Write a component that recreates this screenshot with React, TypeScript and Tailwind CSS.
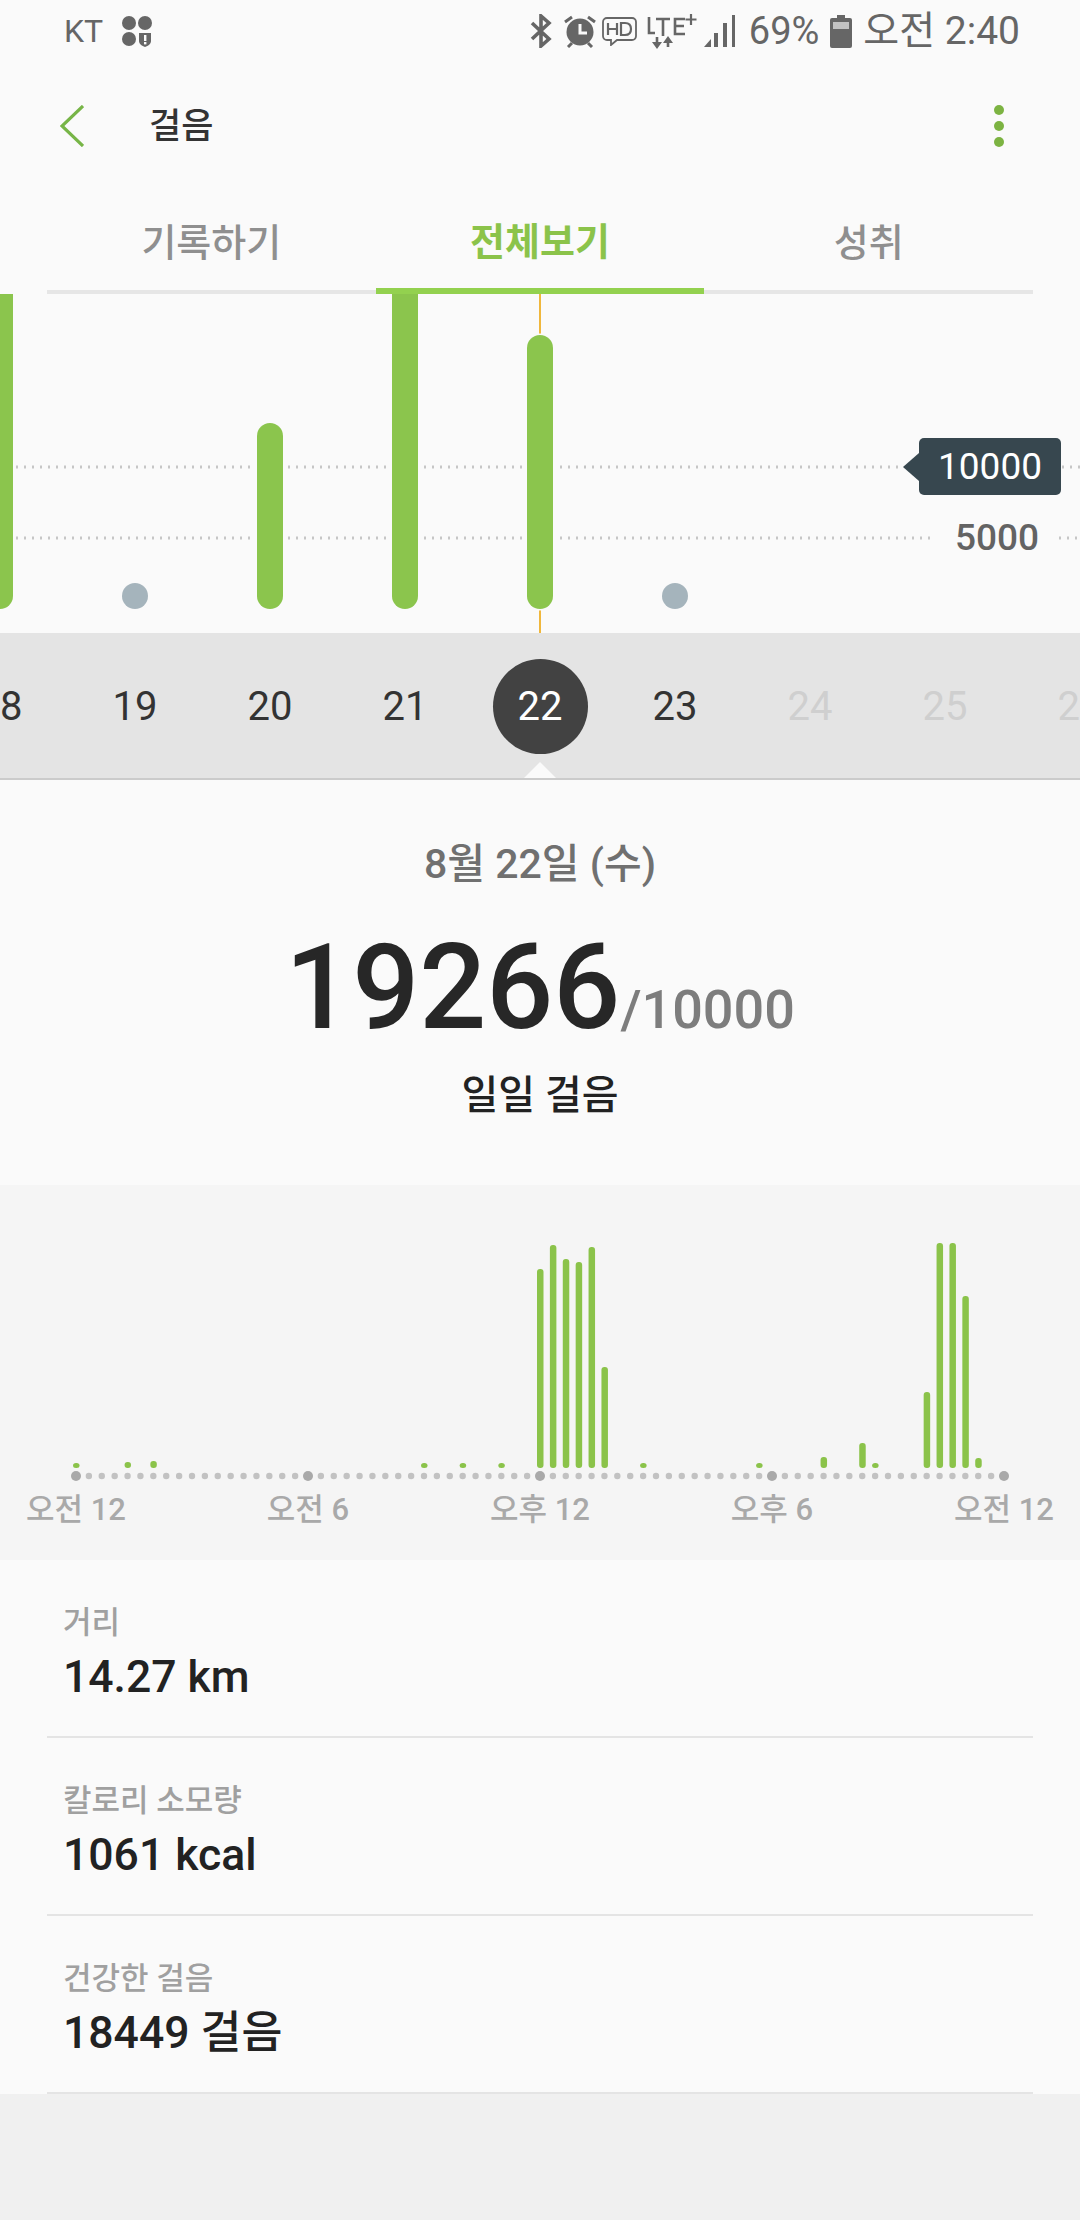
const FONT = "font-['Roboto','Noto_Sans_CJK_KR',sans-serif]";

const hourBars: { idx: number; top: number }[] = [
  { idx: 0, top: 1463 },
  { idx: 4, top: 1462 },
  { idx: 6, top: 1461 },
  { idx: 27, top: 1463 },
  { idx: 30, top: 1463 },
  { idx: 33, top: 1463 },
  { idx: 36, top: 1269 },
  { idx: 37, top: 1245 },
  { idx: 38, top: 1259 },
  { idx: 39, top: 1262 },
  { idx: 40, top: 1247 },
  { idx: 41, top: 1367 },
  { idx: 44, top: 1463 },
  { idx: 53, top: 1463 },
  { idx: 58, top: 1457 },
  { idx: 61, top: 1443 },
  { idx: 62, top: 1463 },
  { idx: 66, top: 1392 },
  { idx: 67, top: 1243 },
  { idx: 68, top: 1243 },
  { idx: 69, top: 1296 },
  { idx: 70, top: 1458 },
];

const days = [
  { n: '18', tone: 'dark' },
  { n: '19', tone: 'dark' },
  { n: '20', tone: 'dark' },
  { n: '21', tone: 'dark' },
  { n: '22', tone: 'active' },
  { n: '23', tone: 'dark' },
  { n: '24', tone: 'off' },
  { n: '25', tone: 'off' },
  { n: '26', tone: 'off' },
];

const stats = [
  { label: '거리', value: '14.27 km' },
  { label: '칼로리 소모량', value: '1061 kcal' },
  { label: '건강한 걸음', value: '18449 걸음' },
];

const axisLabels = ['오전 12', '오전 6', '오후 12', '오후 6', '오전 12'];

function StatusLeft() {
  return (
    <div className="flex items-center gap-[18px]">
      <span className="text-[32px] leading-none text-[#666]">KT</span>
      <svg width="32" height="32" viewBox="0 0 32 32" fill="#666">
        <circle cx="8" cy="8" r="7" />
        <circle cx="24" cy="8" r="7" />
        <circle cx="8" cy="24" r="7" />
        <path d="M18 18h12v8c0 3-3 5-6 6-3-1-6-3-6-6z" />
        <rect x="23" y="20" width="2.4" height="6" fill="#fafafa" />
        <rect x="23" y="27" width="2.4" height="2.4" fill="#fafafa" />
      </svg>
    </div>
  );
}

function StatusRight() {
  return (
    <div className="flex items-center">
      <svg width="22" height="34" viewBox="0 0 22 34" fill="none" stroke="#666" strokeWidth="3.6" className="mr-[12px]">
        <path d="M2 9l17 16-8 7V2l8 7L2 25" />
      </svg>
      <svg width="32" height="33" viewBox="0 0 32 33" className="mr-[6px]">
        <circle cx="16" cy="17" r="13.500" fill="#666" />
        <path d="M16 9v9h7" fill="none" stroke="#fafafa" strokeWidth="3" />
        <path d="M1 7l7-5M31 7l-7-5M4 32l4-4M28 32l-4-4" stroke="#666" strokeWidth="3" />
      </svg>
      <svg width="35" height="29" viewBox="0 0 35 29" fill="none" stroke="#666" strokeWidth="1.800" className="mr-[10px]">
        <path d="M5 1h25a4 4 0 0 1 4 4v14a4 4 0 0 1-4 4H15l-6 5v-5H5a4 4 0 0 1-4-4V5a4 4 0 0 1 4-4z" />
        <path d="M6 6v12M15 6v12M6 12h9M19 6v12h4c5 0 6-2.500 6-6s-1-6-6-6z" strokeWidth="2.200" />
      </svg>
      <svg width="51" height="35" viewBox="0 0 51 35" fill="none" stroke="#666" strokeWidth="2.600" className="mr-[6px]">
        <path d="M2 3v16h6M9 5h14M16 5v17M38 5H28v15h10M28 12h9" />
        <path d="M44 0v11M38.500 5.500h11" strokeWidth="2.200" />
        <path d="M10 23v8M21 33v-8" />
        <path d="M5 28h10l-5 7zM16 29l5-7 5 7z" fill="#666" stroke="none" />
      </svg>
      <svg width="31" height="32" viewBox="0 0 31 32" className="mr-[14px]" fill="#666">
        <path d="M0 32l7-8v8z" />
        <rect x="10" y="18" width="4" height="14" />
        <rect x="19" y="8" width="4" height="24" />
        <rect x="28" y="0" width="3" height="32" />
      </svg>
      <span className="mr-[11px] text-[38px] leading-none text-[#666]">69%</span>
      <svg width="22" height="33" viewBox="0 0 22 33" className="mr-[11px]">
        <path d="M7 0h8v3h5a2 2 0 0 1 2 2v26a2 2 0 0 1-2 2H2a2 2 0 0 1-2-2V5a2 2 0 0 1 2-2h5z" fill="#666" />
        <rect x="3" y="7" width="16" height="7" fill="#c2c2c2" />
      </svg>
      <span className="text-[39px] leading-none text-[#666]">오전 2:40</span>
    </div>
  );
}

function TopChart() {
  const bars = [
    { x: -13, y: -20, tone: '#8bc54d' },
    { x: 122, y: 289, tone: '#a5b4bc' },
    { x: 257, y: 129, tone: '#8bc54d' },
    { x: 392, y: -20, tone: '#8bc54d' },
    { x: 527, y: 41, tone: '#8bc54d' },
    { x: 662, y: 289, tone: '#a5b4bc' },
  ];
  return (
    <div className="relative h-[339px] shrink-0 overflow-hidden">
      <svg width="1080" height="339" viewBox="0 0 1080 339" className="block">
        <line x1="540" y1="0" x2="540" y2="339" stroke="#f0b73c" strokeWidth="2" />
        <line x1="16" y1="173" x2="903" y2="173" stroke="#c6c6c6" strokeWidth="3" strokeDasharray="2 6" />
        <line x1="1062" y1="173" x2="1080" y2="173" stroke="#c6c6c6" strokeWidth="3" strokeDasharray="2 6" />
        <line x1="16" y1="244" x2="932" y2="244" stroke="#c6c6c6" strokeWidth="3" strokeDasharray="2 6" />
        <line x1="1059" y1="244" x2="1080" y2="244" stroke="#c6c6c6" strokeWidth="3" strokeDasharray="2 6" />
        {bars.map((b) => (
          <rect
            key={b.x}
            x={b.x}
            y={b.y}
            width="26"
            height={315 - b.y}
            rx="13"
            fill={b.tone}
            stroke="#fafafa"
            strokeWidth="3"
            paintOrder="stroke"
          />
        ))}
      </svg>
      <div className="absolute left-[903px] top-[144px] flex h-[57px] items-center">
        <div className="h-0 w-0 border-y-[14px] border-r-[16px] border-y-transparent border-r-[#37474f]" />
        <div className="flex h-[57px] w-[142px] items-center justify-center rounded-[5px] bg-[#37474f] text-[37px] leading-none text-white">
          10000
        </div>
      </div>
      <span className="absolute left-[955px] top-[226px] text-[37px] leading-[36px] font-medium text-[#636363]">5000</span>
    </div>
  );
}

function DateStrip() {
  return (
    <div className="relative flex h-[147px] shrink-0 justify-center overflow-hidden border-b-2 border-[#cbcbcb] bg-[#e4e4e4]">
      {days.map((d) => (
        <div key={d.n} className="flex h-[148px] w-[135px] shrink-0 items-start justify-center pt-[26px]">
          <div
            className={
              d.tone === 'active'
                ? 'flex h-[95px] w-[95px] items-center justify-center rounded-full bg-[#424242] pt-[1px] text-[40px] font-[450] text-white'
                : d.tone === 'off'
                  ? 'flex h-[95px] w-[95px] items-center justify-center pt-[1px] text-[40px] font-[450] text-[#cfcfcf]'
                  : 'flex h-[95px] w-[95px] items-center justify-center pt-[1px] text-[40px] font-[450] text-[#333]'
            }
          >
            {d.n}
          </div>
        </div>
      ))}
      <svg width="36" height="18" viewBox="0 0 36 18" className="absolute bottom-[-2px] left-[522px]">
        <path d="M0 18L18 0l18 18z" fill="#fafafa" />
      </svg>
    </div>
  );
}

function HourChart() {
  const xOf = (i: number) => 76 + (i * 928) / 72;
  return (
    <div className="flex h-[375px] shrink-0 flex-col bg-[#f5f5f5]">
      <svg width="1080" height="300" viewBox="0 1185 1080 300" className="block shrink-0">
        {Array.from({ length: 73 }, (_, i) => (
          <circle
            key={i}
            cx={xOf(i)}
            cy={1476}
            r={i % 18 === 0 ? 5 : 3.2}
            fill={i % 18 === 0 ? '#a9a9a9' : '#c2c2c2'}
          />
        ))}
        {hourBars.map((b) => (
          <rect key={b.idx} x={xOf(b.idx) - 3} y={b.top} width="6.500" height={1468 - b.top} rx="3" fill="#8bc34a" />
        ))}
      </svg>
      <div className="flex justify-center">
        {axisLabels.map((l, i) => (
          <span key={i} className="w-[232px] shrink-0 text-center text-[31px] leading-[50px] font-medium whitespace-nowrap text-[#a9a9a9]">
            {l}
          </span>
        ))}
      </div>
    </div>
  );
}

export default function App() {
  return (
    <div className={`${FONT} flex h-[2220px] w-[1080px] flex-col overflow-hidden bg-[#fafafa]`}>
      <div className="flex h-[62px] shrink-0 items-center justify-between pr-[60px] pl-[64px]">
        <StatusLeft />
        <StatusRight />
      </div>

      <div className="flex h-[128px] shrink-0 items-center pr-[76px] pl-[60px]">
        <svg width="24" height="42" viewBox="0 0 24 42" fill="none" stroke="#77b547" strokeWidth="3.200">
          <path d="M23 1L2 21l21 20" />
        </svg>
        <span className="ml-[65px] pt-[2px] text-[35px] font-medium text-[#333]">걸음</span>
        <div className="ml-auto flex flex-col gap-[6px]">
          <span className="h-[10px] w-[10px] rounded-full bg-[#7cb342]" />
          <span className="h-[10px] w-[10px] rounded-full bg-[#7cb342]" />
          <span className="h-[10px] w-[10px] rounded-full bg-[#7cb342]" />
        </div>
      </div>

      <div className="mx-[47px] flex h-[104px] shrink-0 border-b-4 border-[#e6e6e6]">
        <div className="flex h-[100px] flex-1 items-center justify-center pt-[6px] text-[38px] font-medium text-[#8f8f8f]">기록하기</div>
        <div className="-mb-[4px] flex h-[104px] flex-1 items-center justify-center border-b-[6px] border-[#93d14f] pt-[6px] text-[38px] font-bold text-[#8bc34a]">
          전체보기
        </div>
        <div className="flex h-[100px] flex-1 items-center justify-center pt-[6px] text-[38px] font-medium text-[#8f8f8f]">성취</div>
      </div>

      <TopChart />
      <DateStrip />

      <div className="flex h-[405px] shrink-0 flex-col items-center">
        <div className="mt-[61px] text-[41px] leading-[46px] font-medium text-[#707070]">8월 22일 (수)</div>
        <div className="mt-[41px] flex items-baseline leading-[120px]">
          <span className="text-[118px] font-medium text-[#272727]">19266</span>
          <span className="text-[54px] font-medium text-[#7d7d7d]">/10000</span>
        </div>
        <div className="mt-[3px] text-[40px] leading-[46px] font-medium text-[#222]">일일 걸음</div>
      </div>

      <HourChart />

      <div className="flex h-[534px] shrink-0 flex-col px-[47px]">
        {stats.map((s) => (
          <div key={s.label} className="flex h-[178px] flex-col border-b-2 border-[#e4e4e4] px-[16px] pt-[44px]">
            <span className="text-[31px] leading-[38px] font-medium text-[#a0a0a0]">{s.label}</span>
            <span className="mt-[9px] text-[44.500px] leading-[52px] font-medium text-[#222]">{s.value}</span>
          </div>
        ))}
      </div>

      <div className="flex-1 bg-[#f0f0f0]" />
    </div>
  );
}
